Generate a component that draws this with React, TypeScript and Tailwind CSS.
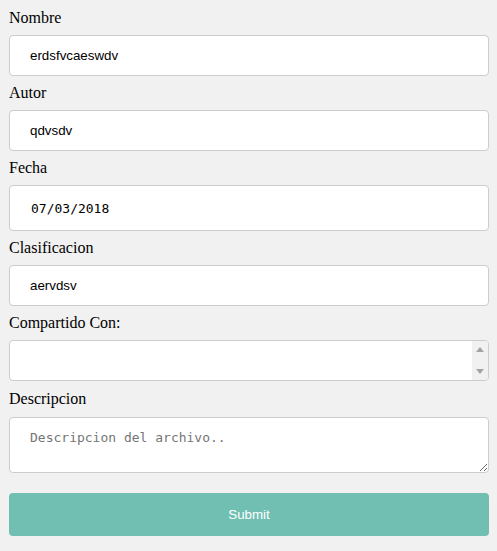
import React from "react";

const labelCls =
  "block h-[18px] leading-[18px] text-[16px] text-black [font-family:'Liberation_Serif',serif]";
const inputCls =
  "block w-full h-[41px] px-5 rounded border border-[#cccccc] bg-white text-[13.3333px] text-black outline-none [font-family:'Liberation_Sans',Arial,sans-serif]";

export default function App() {
  return (
    <div className="min-h-[551px] w-full bg-[#f1f1f1] pt-[9px] pl-[9px] pr-[8px]">
      <form onSubmit={(e) => e.preventDefault()}>
        <label className={labelCls}>Nombre</label>
        <input className={`${inputCls} my-2`} defaultValue="erdsfvcaeswdv" />

        <label className={labelCls}>Autor</label>
        <input className={`${inputCls} my-2`} defaultValue="qdvsdv" />

        <label className={labelCls}>Fecha</label>
        <input
          className="my-2 block h-[46px] w-full rounded border border-[#cccccc] bg-white pl-[21px] text-[13px] text-black outline-none [font-family:'DejaVu_Sans_Mono',monospace]"
          defaultValue="07/03/2018"
        />

        <label className={labelCls}>Clasificacion</label>
        <input className={`${inputCls} my-2`} defaultValue="aervdsv" />

        <label className={labelCls}>Compartido Con:</label>
        {/* multiple select, empty list with its scrollbar */}
        <div className="mt-2 mb-[9px] flex h-[41px] w-full overflow-hidden rounded border border-[#cccccc] bg-white">
          <div className="flex-1" />
          <div className="flex w-[16px] flex-col items-center justify-between bg-[#f1f1f1] py-[6px]">
            <svg width="8" height="5" viewBox="0 0 8 5">
              <path d="M0 5 L4 0 L8 5 Z" fill="#a3a3a3" />
            </svg>
            <svg width="8" height="5" viewBox="0 0 8 5">
              <path d="M0 0 L8 0 L4 5 Z" fill="#a3a3a3" />
            </svg>
          </div>
        </div>

        <label className={labelCls}>Descripcion</label>
        <textarea
          className="mt-[9px] block h-[56px] w-full rounded border border-[#cccccc] bg-white px-5 py-3 text-[13px] leading-[15px] text-black outline-none placeholder:text-[#757575] [font-family:'DejaVu_Sans_Mono',monospace]"
          placeholder="Descripcion del archivo.."
        />

        <button
          type="submit"
          className="mt-5 block h-[43px] w-full rounded bg-[#70bfb2] text-[13.3333px] text-white [font-family:'Liberation_Sans',Arial,sans-serif]"
        >
          Submit
        </button>
      </form>
    </div>
  );
}
